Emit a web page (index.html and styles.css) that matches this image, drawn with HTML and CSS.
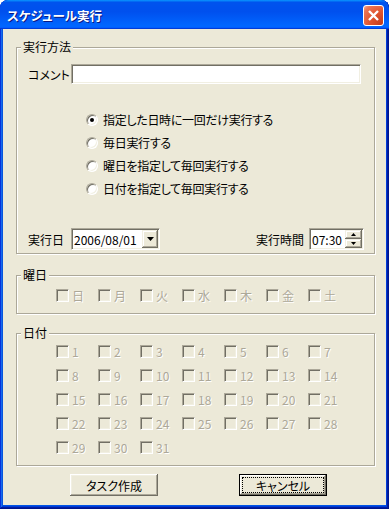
FILE: index.html
```html
<!DOCTYPE html>
<html lang="ja">
<head>
    <meta charset="UTF-8">
    <title>スケジュール実行</title>
    <link rel="stylesheet" href="styles.css">
</head>
<body>
    <div class="window">
        <div class="titlebar">
            <span class="title">スケジュール実行</span>
            <span class="close">
                <svg width="19" height="19" viewBox="0 0 19 19"><path d="M5 5L14 14M14 5L5 14" stroke="#fff" stroke-width="2.4"/></svg>
            </span>
        </div>

        <div class="client">
            <fieldset class="group method">
                <legend>実行方法</legend>
                <div class="group-body">
                    <div class="comment-row">
                        <span class="field-label">コメント</span>
                        <div class="edit comment"></div>
                    </div>

                    <div class="options">
                        <div class="option"><span class="radio checked"></span>指定した日時に一回だけ実行する</div>
                        <div class="option"><span class="radio"></span>毎日実行する</div>
                        <div class="option"><span class="radio"></span>曜日を指定して毎回実行する</div>
                        <div class="option"><span class="radio"></span>日付を指定して毎回実行する</div>
                    </div>

                    <div class="date-row">
                        <span class="field-label">実行日</span>
                        <div class="edit combo">
                            <span class="value">2006/08/01</span>
                            <span class="bevel drop">
                                <svg width="7" height="4" viewBox="0 0 7 4"><path d="M0 0H7L3.5 4Z" fill="#000"/></svg>
                            </span>
                        </div>
                        <span class="time-label">実行時間</span>
                        <div class="edit timebox">
                            <span class="value">07:30</span>
                            <span class="spin">
                                <span class="bevel spin-btn"><svg width="5" height="3" viewBox="0 0 5 3"><path d="M0 3H5L2.5 0Z" fill="#000"/></svg></span>
                                <span class="bevel spin-btn"><svg width="5" height="3" viewBox="0 0 5 3"><path d="M0 0H5L2.5 3Z" fill="#000"/></svg></span>
                            </span>
                        </div>
                    </div>
                </div>
            </fieldset>

            <fieldset class="group week">
                <legend>曜日</legend>
                <div class="checks">
                    <div class="check-item"><span class="check"></span>日</div>
                    <div class="check-item"><span class="check"></span>月</div>
                    <div class="check-item"><span class="check"></span>火</div>
                    <div class="check-item"><span class="check"></span>水</div>
                    <div class="check-item"><span class="check"></span>木</div>
                    <div class="check-item"><span class="check"></span>金</div>
                    <div class="check-item"><span class="check"></span>土</div>
                </div>
            </fieldset>

            <fieldset class="group days">
                <legend>日付</legend>
                <div class="checks">
                    <div class="check-item"><span class="check"></span>1</div>
                    <div class="check-item"><span class="check"></span>2</div>
                    <div class="check-item"><span class="check"></span>3</div>
                    <div class="check-item"><span class="check"></span>4</div>
                    <div class="check-item"><span class="check"></span>5</div>
                    <div class="check-item"><span class="check"></span>6</div>
                    <div class="check-item"><span class="check"></span>7</div>
                    <div class="check-item"><span class="check"></span>8</div>
                    <div class="check-item"><span class="check"></span>9</div>
                    <div class="check-item"><span class="check"></span>10</div>
                    <div class="check-item"><span class="check"></span>11</div>
                    <div class="check-item"><span class="check"></span>12</div>
                    <div class="check-item"><span class="check"></span>13</div>
                    <div class="check-item"><span class="check"></span>14</div>
                    <div class="check-item"><span class="check"></span>15</div>
                    <div class="check-item"><span class="check"></span>16</div>
                    <div class="check-item"><span class="check"></span>17</div>
                    <div class="check-item"><span class="check"></span>18</div>
                    <div class="check-item"><span class="check"></span>19</div>
                    <div class="check-item"><span class="check"></span>20</div>
                    <div class="check-item"><span class="check"></span>21</div>
                    <div class="check-item"><span class="check"></span>22</div>
                    <div class="check-item"><span class="check"></span>23</div>
                    <div class="check-item"><span class="check"></span>24</div>
                    <div class="check-item"><span class="check"></span>25</div>
                    <div class="check-item"><span class="check"></span>26</div>
                    <div class="check-item"><span class="check"></span>27</div>
                    <div class="check-item"><span class="check"></span>28</div>
                    <div class="check-item"><span class="check"></span>29</div>
                    <div class="check-item"><span class="check"></span>30</div>
                    <div class="check-item"><span class="check"></span>31</div>
                </div>
            </fieldset>

            <div class="actions">
                <div class="btn"><span class="btn-text">タスク作成</span></div>
                <div class="btn default"><span class="btn-text focus">キャンセル</span></div>
            </div>
        </div>
    </div>
</body>
</html>
```

FILE: styles.css
```css
* {
    box-sizing: border-box;
}

body {
    margin: 0;
    background: #fff;
    color: #000;
    font-family: "Noto Sans CJK JP", "Noto Sans", sans-serif;
    font-size: 12px;
    font-feature-settings: "palt";
}

/* window frame */
.window {
    width: 389px;
    height: 509px;
    display: flex;
    flex-direction: column;
    background: #0055e5;
    border-radius: 8px 8px 0 0;
    overflow: hidden;
    box-shadow: inset -1px -1px #00138c, inset 1px 1px #0831d9, inset -2px -2px #001ea0, inset 2px 2px #166aee, inset -3px -3px #003bda, inset 3px 3px #0855dd;
}

.titlebar {
    flex: none;
    height: 29px;
    display: flex;
    align-items: center;
    padding: 0 5px 0 7px;
    border-radius: 8px 8px 0 0;
    background: linear-gradient(180deg, #0997ff, #0053ee 8%, #0050ee 40%, #0066ff 88%, #0066ff 93%, #005bff 95%, #003dd7 96%, #003dd7);
}

.title {
    flex: 1;
    color: #fff;
    font-size: 12.5px;
    font-weight: bold;
    line-height: 14px;
    padding-top: 3px;
    text-shadow: 1px 1px #0a1883;
}

.close {
    width: 21px;
    height: 21px;
    margin-top: 2px;
    border: 1px solid #fff;
    border-radius: 3px;
    background: radial-gradient(circle at 100% 100%, #c0391a 0%, #e0542e 50%, #ec7656 85%, #f6b09c 100%);
    display: flex;
}

.client {
    flex: 1;
    margin: 0 3px 4px;
    padding: 11px 0 0 13px;
    background: #ece9d8;
}

/* etched group boxes */
.group {
    width: 359px;
    min-width: 0;
    margin: 0;
    padding: 0;
    border: 1px solid #aca899;
    box-shadow: 1px 1px 0 #fff, inset 1px 1px 0 #fff;
}

.group legend {
    margin-left: 4px;
    padding: 0 2px;
    line-height: 14px;
    background: #ece9d8;
}

.method {
    padding-bottom: 3px;
}

.group-body {
    padding: 0 10px 0 11px;
}

.week {
    margin-top: 14px;
    padding: 7px 0 11px;
}

.days {
    margin-top: 12px;
    padding: 5px 0 11px;
}

/* sunken edit fields */
.edit {
    height: 20px;
    background: #fff;
    border: 1px solid;
    border-color: #aca899 #fff #fff #aca899;
    box-shadow: inset 1px 1px #716f64, inset -1px -1px #f1efe2;
}

.bevel {
    background: #ece9d8;
    box-shadow: inset -1px -1px #716f64, inset 1px 1px #f1efe2, inset -2px -2px #aca899, inset 2px 2px #fff;
    display: flex;
    align-items: center;
    justify-content: center;
}

.comment-row {
    display: flex;
    align-items: center;
    margin-top: 10px;
}

.field-label {
    width: 43px;
    flex: none;
}

.comment {
    width: 290px;
}

.options {
    margin-top: 24px;
    padding-left: 58px;
}

.option {
    display: flex;
    align-items: center;
    gap: 5px;
    height: 23px;
    letter-spacing: -0.3px;
}

.radio {
    position: relative;
    width: 12px;
    height: 12px;
    flex: none;
    border-radius: 50%;
    background: #fff;
    border: 1px solid;
    border-color: #aca899 #fff #fff #aca899;
    box-shadow: inset 1px 1px #716f64, inset -1px -1px #f1efe2;
}

.radio.checked::after {
    content: '';
    position: absolute;
    left: 3px;
    top: 3px;
    width: 4px;
    height: 4px;
    border-radius: 50%;
    background: #000;
}

.date-row {
    display: flex;
    align-items: center;
    height: 22px;
    margin-top: 28px;
}

.combo,
.timebox {
    height: 22px;
    display: flex;
    align-items: center;
    justify-content: space-between;
    padding: 1px;
}

.combo {
    width: 89px;
}

.value {
    padding-left: 1px;
}

.drop {
    width: 16px;
    height: 18px;
}

.time-label {
    margin-left: auto;
    margin-right: 5px;
}

.timebox {
    width: 55px;
}

.spin {
    display: flex;
    flex-direction: column;
    width: 17px;
}

.spin-btn {
    height: 9px;
}

/* disabled check boxes */
.checks {
    display: grid;
    grid-template-columns: repeat(7, 42px);
    row-gap: 11px;
    margin-left: 39px;
}

.check-item {
    display: flex;
    align-items: center;
    gap: 3px;
    height: 13px;
    color: #aca899;
    text-shadow: 1px 1px #fff;
}

.check {
    width: 13px;
    height: 13px;
    flex: none;
    background: #ece9d8;
    border: 1px solid;
    border-color: #aca899 #fff #fff #aca899;
    box-shadow: inset 1px 1px #716f64, inset -1px -1px #f1efe2;
}

/* buttons */
.actions {
    display: flex;
    gap: 81px;
    margin-top: 8px;
    padding-left: 54px;
}

.btn {
    width: 88px;
    height: 22px;
    display: flex;
    padding: 3px;
    background: #ece9d8;
    box-shadow: inset -1px -1px #716f64, inset 1px 1px #fff, inset -2px -2px #aca899, inset 2px 2px #f1efe2;
}

.btn.default {
    border: 1px solid #000;
    padding: 2px;
}

.btn-text {
    flex: 1;
    display: flex;
    align-items: center;
    justify-content: center;
    border: 1px solid transparent;
}

.btn-text.focus {
    border: 1px dotted #000;
}
```
